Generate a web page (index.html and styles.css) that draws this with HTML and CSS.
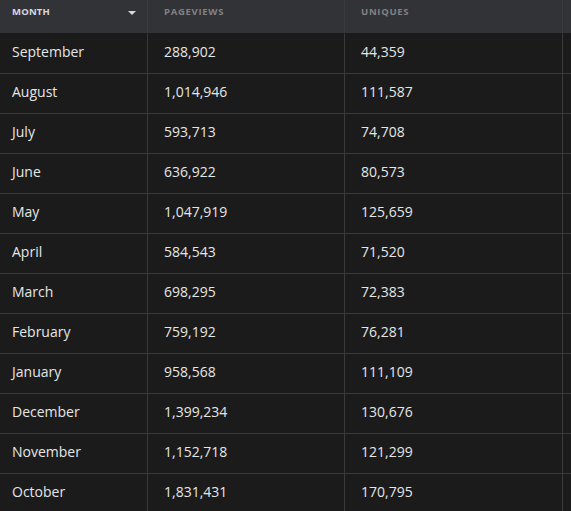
FILE: index.html
```html
<!DOCTYPE html>
<html>
<head>
<meta charset="utf-8">
<link rel="stylesheet" href="styles.css">
</head>
<body>
<table class="stats">
  <thead>
    <tr>
      <th class="col-month active"><div class="th-inner"><span>MONTH</span><span class="sort"></span></div></th>
      <th class="col-pv">PAGEVIEWS</th>
      <th class="col-uq">UNIQUES</th>
      <th class="col-extra"></th>
    </tr>
  </thead>
  <tbody>
    <tr><td class="col-month">September</td><td>288,902</td><td>44,359</td><td></td></tr>
    <tr><td class="col-month">August</td><td>1,014,946</td><td>111,587</td><td></td></tr>
    <tr><td class="col-month">July</td><td>593,713</td><td>74,708</td><td></td></tr>
    <tr><td class="col-month">June</td><td>636,922</td><td>80,573</td><td></td></tr>
    <tr><td class="col-month">May</td><td>1,047,919</td><td>125,659</td><td></td></tr>
    <tr><td class="col-month">April</td><td>584,543</td><td>71,520</td><td></td></tr>
    <tr><td class="col-month">March</td><td>698,295</td><td>72,383</td><td></td></tr>
    <tr><td class="col-month">February</td><td>759,192</td><td>76,281</td><td></td></tr>
    <tr><td class="col-month">January</td><td>958,568</td><td>111,109</td><td></td></tr>
    <tr><td class="col-month">December</td><td>1,399,234</td><td>130,676</td><td></td></tr>
    <tr><td class="col-month">November</td><td>1,152,718</td><td>121,299</td><td></td></tr>
    <tr><td class="col-month">October</td><td>1,831,431</td><td>170,795</td><td></td></tr>
  </tbody>
</table>
</body>
</html>
```

FILE: styles.css
```css
html, body {
  margin: 0;
  padding: 0;
  background: #1b1b1b;
  overflow: hidden;
  width: 571px;
  height: 511px;
}
.stats {
  border-collapse: separate;
  border-spacing: 0;
  table-layout: fixed;
  width: 600px;
  font-family: "Open Sans", "Noto Sans", sans-serif;
  color: #e6e6e6;
}
.stats th {
  height: 34px;
  padding: 6px 16px 0;
  background: #323336;
  border-right: 1px solid #3a3b3e;
  border-bottom: 1px solid #1b1b1b;
  box-sizing: border-box;
  text-align: left;
  font-size: 9.5px;
  line-height: 12px;
  font-weight: 700;
  letter-spacing: 0.7px;
  color: #818286;
  vertical-align: top;
}
.stats th.active {
  color: #d6d8e4;
  letter-spacing: 0.2px;
}
.stats th.col-month { width: 148px; padding: 6px 11px 0 12px; }
.stats th.col-pv { width: 197px; }
.stats th.col-uq { width: 218px; }
.th-inner {
  display: flex;
  align-items: center;
  justify-content: space-between;
}
.sort {
  width: 0;
  height: 0;
  border-left: 4.5px solid transparent;
  border-right: 4.5px solid transparent;
  border-top: 4.5px solid #d8d8dc;
  margin-top: 1px;
}
.stats td {
  height: 40px;
  padding: 0 16px 5px;
  box-sizing: border-box;
  border-right: 1px solid #3a3a3a;
  border-bottom: 1px solid #3a3a3a;
  font-size: 14px;
  vertical-align: middle;
  white-space: nowrap;
  overflow: hidden;
}
.stats td.col-month { padding-left: 12px; }
```
